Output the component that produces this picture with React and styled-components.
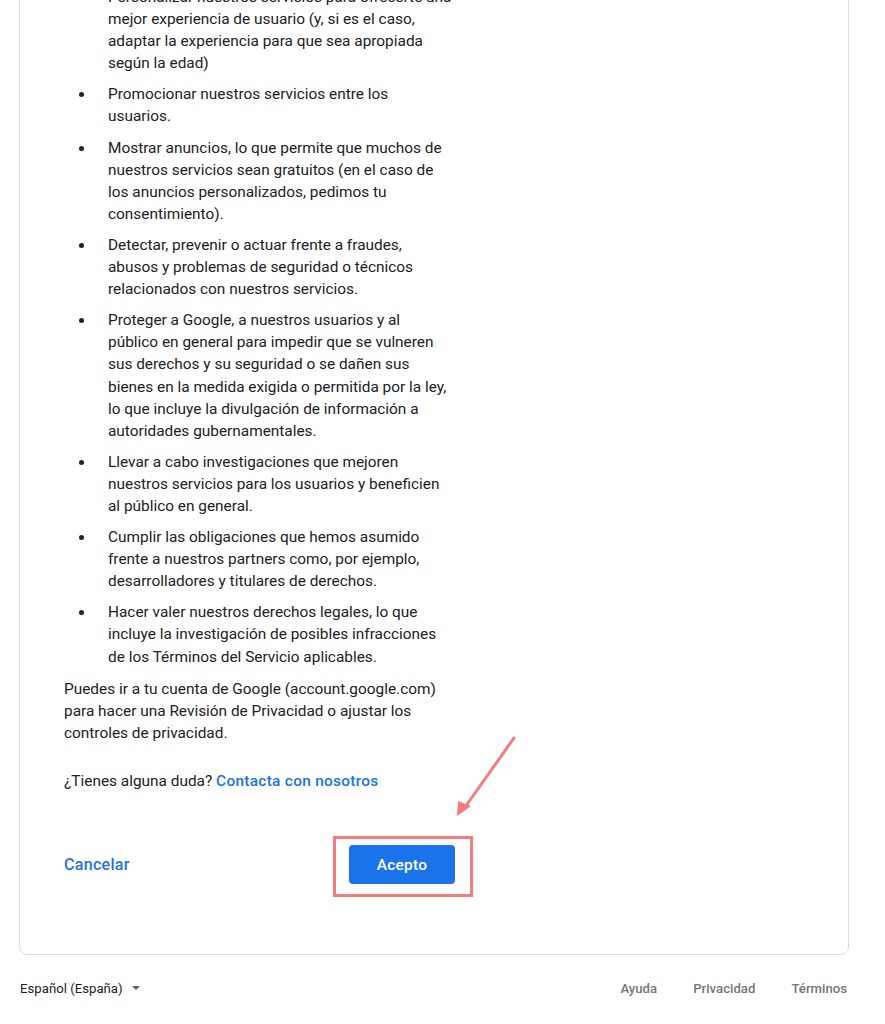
import React from "react";
import styled, { createGlobalStyle } from "styled-components";

const GlobalStyle = createGlobalStyle`
  html, body {
    margin: 0;
    padding: 0;
    background: #ffffff;
    overflow: hidden;
  }
  body {
    font-family: Roboto, "Noto Sans", Arial, sans-serif;
    color: #202124;
  }
`;

const Page = styled.div`
  display: flow-root;
  padding-left: 19px;
  width: 830px;
`;

const Card = styled.section`
  position: relative;
  margin-top: -40px;
  border: 1px solid #dadce0;
  border-radius: 8px;
  padding: 25px 44px 70px 44px;
`;

const Column = styled.div`
  width: 390px;
  font-size: 15.4px;
  line-height: 22.1px;
  color: #202124;
`;

const List = styled.ul`
  list-style: none;
  margin: 0;
  padding: 0;
  display: flex;
  flex-direction: column;
  gap: 9px;
`;

const Item = styled.li`
  display: flex;
`;

const Bullet = styled.span`
  flex: 0 0 44px;
  position: relative;
  &::before {
    content: "";
    position: absolute;
    left: 15px;
    top: 9px;
    width: 5px;
    height: 5px;
    border-radius: 50%;
    background: #202124;
  }
`;

const ItemText = styled.span`
  flex: 1;
`;

const Paragraph = styled.p`
  margin: ${(p) => p.$top || 0}px 0 0 0;
`;

const Link = styled.a`
  color: #1a73e8;
  font-weight: 500;
  letter-spacing: 0.3px;
  text-decoration: none;
`;

const Actions = styled.div`
  display: flex;
  align-items: center;
  justify-content: space-between;
  margin-top: 53px;
  width: 391px;
`;

const TextButton = styled.button`
  border: none;
  background: none;
  padding: 0;
  font-family: inherit;
  font-size: 16px;
  font-weight: 500;
  letter-spacing: 0.3px;
  color: #1a73e8;
  cursor: pointer;
`;

const Highlight = styled.div`
  margin: -9px -18px -13px -16px;
  padding: 6px 15px 10px 13px;
  border: 3px solid #f47c7c;
`;

const PrimaryButton = styled.button`
  display: block;
  width: 106px;
  height: 39px;
  border: none;
  border-radius: 4px;
  background: #1a73e8;
  color: #ffffff;
  font-family: inherit;
  font-size: 15.4px;
  font-weight: 500;
  letter-spacing: 0.3px;
  cursor: pointer;
`;

const Arrow = styled.svg`
  position: absolute;
  left: 410px;
  top: 769px;
`;

const Footer = styled.footer`
  display: flex;
  align-items: center;
  justify-content: space-between;
  height: 66px;
  padding: 0 2px 0 1px;
  font-size: 13.2px;
`;

const Language = styled.div`
  display: flex;
  align-items: center;
  gap: 9px;
  color: #202124;
`;

const Caret = styled.span`
  width: 0;
  height: 0;
  border-left: 4px solid transparent;
  border-right: 4px solid transparent;
  border-top: 4px solid #5f6368;
`;

const FooterLinks = styled.nav`
  display: flex;
  gap: 36px;
`;

const FooterLink = styled.a`
  color: #757575;
  font-weight: 500;
  text-decoration: none;
`;

const items = [
  "Personalizar nuestros servicios para ofrecerte una mejor experiencia de usuario (y, si es el caso, adaptar la experiencia para que sea apropiada según la edad)",
  "Promocionar nuestros servicios entre los usuarios.",
  "Mostrar anuncios, lo que permite que muchos de nuestros servicios sean gratuitos (en el caso de los anuncios personalizados, pedimos tu consentimiento).",
  "Detectar, prevenir o actuar frente a fraudes, abusos y problemas de seguridad o técnicos relacionados con nuestros servicios.",
  "Proteger a Google, a nuestros usuarios y al público en general para impedir que se vulneren sus derechos y su seguridad o se dañen sus bienes en la medida exigida o permitida por la ley, lo que incluye la divulgación de información a autoridades gubernamentales.",
  "Llevar a cabo investigaciones que mejoren nuestros servicios para los usuarios y beneficien al público en general.",
  "Cumplir las obligaciones que hemos asumido frente a nuestros partners como, por ejemplo, desarrolladores y titulares de derechos.",
  "Hacer valer nuestros derechos legales, lo que incluye la investigación de posibles infracciones de los Términos del Servicio aplicables.",
];

const App = () => {
  return (
    <Page>
      <GlobalStyle />
      <Card>
        <Column>
          <List>
            {items.map((text, i) => (
              <Item key={i}>
                <Bullet />
                <ItemText>{text}</ItemText>
              </Item>
            ))}
          </List>
          <Paragraph $top={10}>
            Puedes ir a tu cuenta de Google (account.google.com) para hacer una
            Revisión de Privacidad o ajustar los controles de privacidad.
          </Paragraph>
          <Paragraph $top={26}>
            ¿Tienes alguna duda? <Link href="#">Contacta con nosotros</Link>
          </Paragraph>
          <Actions>
            <TextButton>Cancelar</TextButton>
            <Highlight>
              <PrimaryButton>Acepto</PrimaryButton>
            </Highlight>
          </Actions>
        </Column>
        <Arrow width="90" height="95" viewBox="0 0 90 95">
          <line
            x1="84"
            y1="8"
            x2="33"
            y2="80"
            stroke="#f47c7c"
            strokeWidth="3"
            strokeLinecap="round"
          />
          <polygon points="27,86 28,71 41,76" fill="#f47c7c" />
        </Arrow>
      </Card>
      <Footer>
        <Language>
          Español (España)
          <Caret />
        </Language>
        <FooterLinks>
          <FooterLink href="#">Ayuda</FooterLink>
          <FooterLink href="#">Privacidad</FooterLink>
          <FooterLink href="#">Términos</FooterLink>
        </FooterLinks>
      </Footer>
    </Page>
  );
};

export default App;
